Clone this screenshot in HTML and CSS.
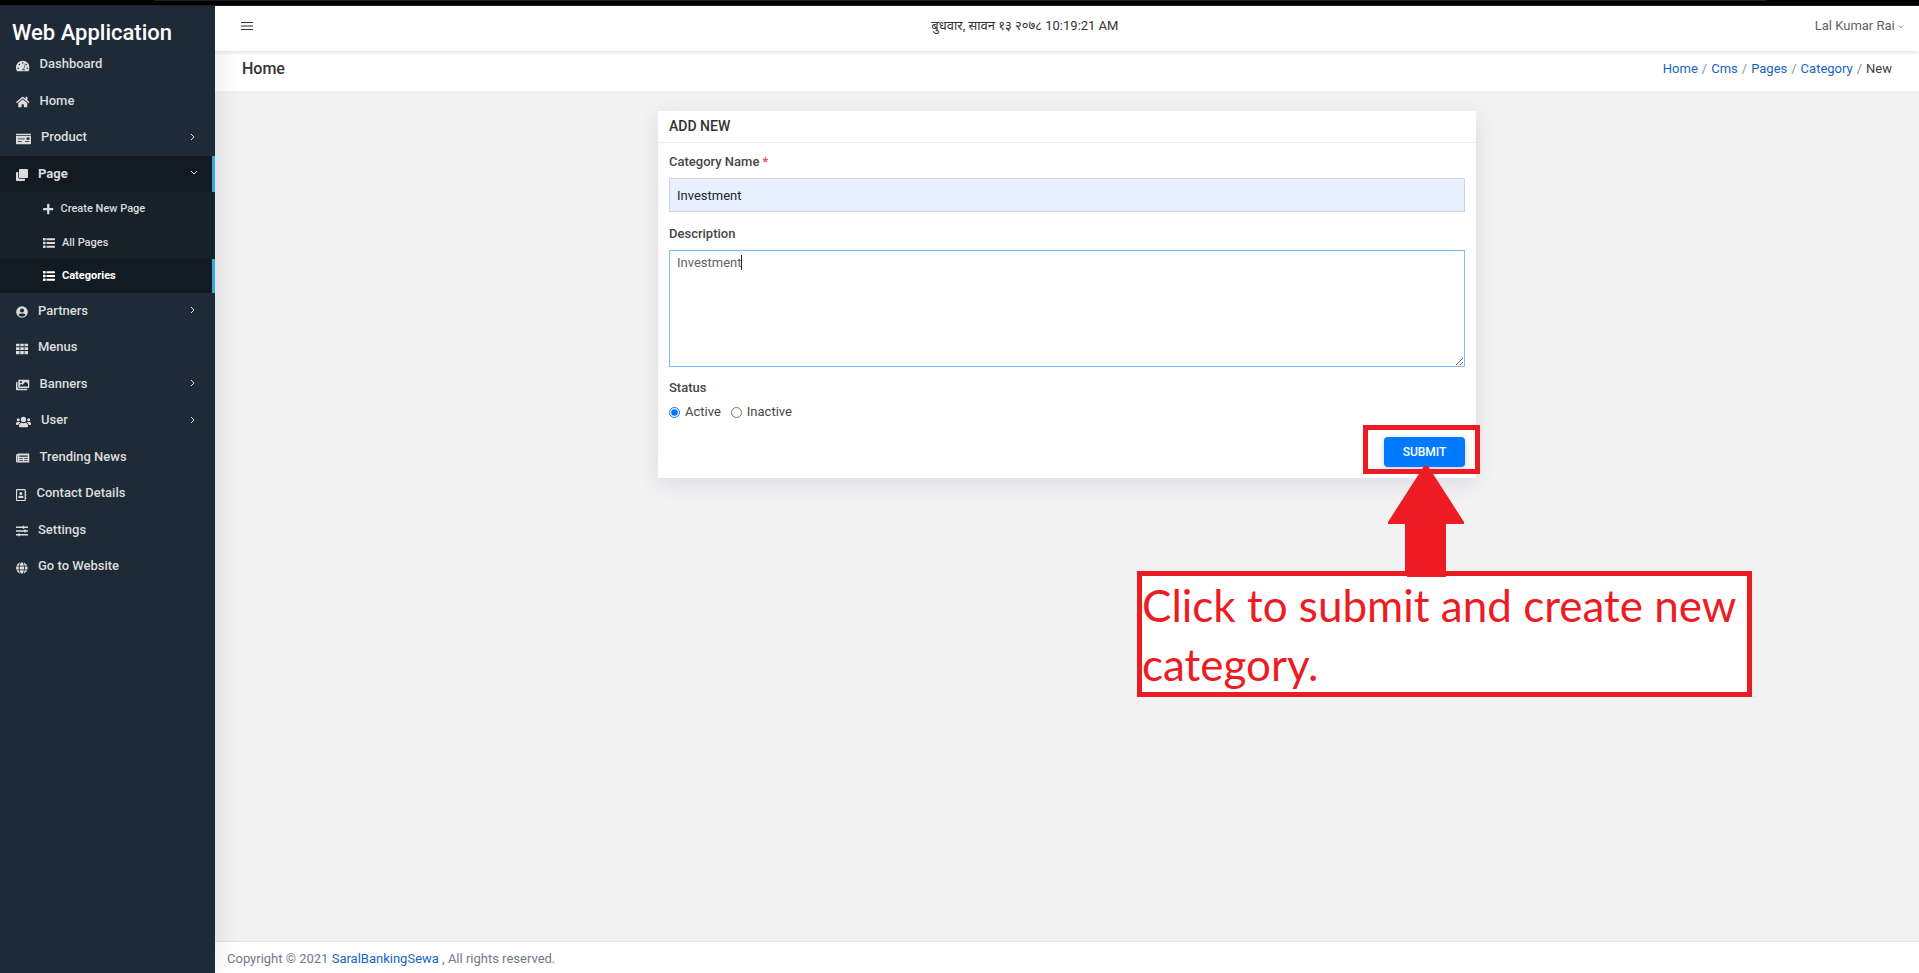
FILE: index.html
```html
<!DOCTYPE html>
<html lang="en">
<head>
<meta charset="utf-8">
<title>Web Application</title>
<link rel="stylesheet" href="styles.css">
</head>
<body>
<svg class="sprite" aria-hidden="true">
  <symbol id="gauge" viewBox="0 0 576 512"><path fill-rule="evenodd" d="M288 32C129 32 0 161 0 320c0 53 14 102 39 145 6 10 16 15 28 15h442c12 0 22-5 28-15 25-43 39-92 39-145C576 161 447 32 288 32zm0 64c18 0 32 14 32 32s-14 32-32 32-32-14-32-32 14-32 32-32zM96 384a32 32 0 1 1 0-64 32 32 0 0 1 0 64zm48-160a32 32 0 1 1 0-64 32 32 0 0 1 0 64zm246-72c13 4 20 18 16 30l-62 186c15 14 24 33 24 48 0 12-3 22-8 32h-40l70-250c3-10-12-14-16-4l-74 254h-20c-5-10-8-20-8-32 0-35 28-64 64-64h10l62-185c4-12 12-17 22-15zm42 72a32 32 0 1 1 0-64 32 32 0 0 1 0 64zm48 160a32 32 0 1 1 0-64 32 32 0 0 1 0 64z"/></symbol>
  <symbol id="house" viewBox="0 0 576 512"><path d="M280.4 148.300L96 300.100V464a16 16 0 0 0 16 16l112-.3a16 16 0 0 0 16-16V368a16 16 0 0 1 16-16h64a16 16 0 0 1 16 16v95.600a16 16 0 0 0 16 16.100L464 480a16 16 0 0 0 16-16V300L295.700 148.300a12.200 12.200 0 0 0-15.300 0zM571.600 251.500L488 182.600V44.100a12 12 0 0 0-12-12h-56a12 12 0 0 0-12 12v72.600L318.500 43a48 48 0 0 0-61 0L4.300 251.500a12 12 0 0 0-1.600 16.900l25.500 31a12 12 0 0 0 16.900 1.600l235.200-193.700a12.200 12.200 0 0 1 15.300 0L530.900 301a12 12 0 0 0 16.900-1.600l25.500-31a12 12 0 0 0-1.700-16.900z"/></symbol>
  <symbol id="check" viewBox="0 0 640 512"><path fill-rule="evenodd" d="M624 32H16C7 32 0 39 0 48v48h640V48c0-9-7-16-16-16zM0 128v320c0 18 14 32 32 32h576c18 0 32-14 32-32V128H0zm448 80c0-9 7-16 16-16h96c9 0 16 7 16 16v64c0 9-7 16-16 16h-96c-9 0-16-7-16-16v-64zM72 232h304v32H72v-32zm0 112h176v32H72v-32zm312 0h184v32H384v-32z"/></symbol>
  <symbol id="clone" viewBox="0 0 512 512"><path d="M464 0c26.500 0 48 21.500 48 48v288c0 26.500-21.500 48-48 48H176c-26.500 0-48-21.500-48-48V48c0-26.500 21.500-48 48-48h288M176 416c-44.100 0-80-35.900-80-80V128H48c-26.500 0-48 21.500-48 48v288c0 26.500 21.500 48 48 48h288c26.500 0 48-21.500 48-48v-48H176z"/></symbol>
  <symbol id="plus" viewBox="0 0 448 512"><path d="M416 208H272V64c0-17.700-14.300-32-32-32h-32c-17.700 0-32 14.300-32 32v144H32c-17.700 0-32 14.300-32 32v32c0 17.700 14.300 32 32 32h144v144c0 17.700 14.300 32 32 32h32c17.700 0 32-14.300 32-32V304h144c17.700 0 32-14.300 32-32v-32c0-17.700-14.300-32-32-32z"/></symbol>
  <symbol id="list" viewBox="0 0 512 512"><path d="M16 40h80a16 16 0 0 1 16 16v72a16 16 0 0 1-16 16H16a16 16 0 0 1-16-16V56a16 16 0 0 1 16-16zm0 160h80a16 16 0 0 1 16 16v72a16 16 0 0 1-16 16H16a16 16 0 0 1-16-16v-72a16 16 0 0 1 16-16zm0 160h80a16 16 0 0 1 16 16v72a16 16 0 0 1-16 16H16a16 16 0 0 1-16-16v-72a16 16 0 0 1 16-16zM160 56h336a16 16 0 0 1 16 16v48a16 16 0 0 1-16 16H160a16 16 0 0 1-16-16V72a16 16 0 0 1 16-16zm0 160h336a16 16 0 0 1 16 16v48a16 16 0 0 1-16 16H160a16 16 0 0 1-16-16v-48a16 16 0 0 1 16-16zm0 160h336a16 16 0 0 1 16 16v48a16 16 0 0 1-16 16H160a16 16 0 0 1-16-16v-48a16 16 0 0 1 16-16z"/></symbol>
  <symbol id="person" viewBox="0 0 512 512"><path fill-rule="evenodd" d="M256 8a248 248 0 1 0 0 496 248 248 0 0 0 0-496zm0 96a88 88 0 1 1 0 176 88 88 0 0 1 0-176zm0 344c-59 0-111-27-146-69 19-35 56-59 98-59 13 0 23 8 48 8s35-8 48-8c42 0 79 24 98 59-35 42-87 69-146 69z"/></symbol>
  <symbol id="grid" viewBox="0 0 512 512"><path d="M24 32h102a24 24 0 0 1 24 24v80H0V56a24 24 0 0 1 24-24zm157 0h150v104H181zm181 0h126a24 24 0 0 1 24 24v80H362zM0 181h150v118H0zm181 0h150v118H181zm181 0h150v118H362zM0 344h150v136H24a24 24 0 0 1-24-24zm181 0h150v136H181zm181 0h150v112a24 24 0 0 1-24 24H362z"/></symbol>
  <symbol id="images" viewBox="0 0 576 512"><path fill-rule="evenodd" d="M480 416v16c0 26-21 48-48 48H48c-27 0-48-22-48-48V176c0-26 21-48 48-48h16v208c0 44 36 80 80 80h336zm96-80V80c0-26-21-48-48-48H144c-27 0-48 22-48 48v256c0 27 21 48 48 48h384c27 0 48-21 48-48zM256 128a48 48 0 1 1-96 0 48 48 0 0 1 96 0zm-96 144l55-55c5-5 13-5 17 0l40 39 135-135c5-5 13-5 17 0l88 87v112H160v-48z"/></symbol>
  <symbol id="people" viewBox="0 0 640 512"><path d="M96 224a64 64 0 1 0 0-128 64 64 0 0 0 0 128zm448 0a64 64 0 1 0 0-128 64 64 0 0 0 0 128zm32 32h-64c-18 0-33 7-45 18 40 22 69 62 75 110h66c18 0 32-14 32-32v-32c0-35-29-64-64-64zm-256 0a112 112 0 1 0 0-224 112 112 0 0 0 0 224zm77 32h-8a155 155 0 0 1-138 0h-8c-64 0-115 52-115 115v29c0 26 21 48 48 48h288c27 0 48-22 48-48v-29c0-63-52-115-115-115zm-224-14c-12-11-27-18-45-18H64c-35 0-64 29-64 64v32c0 18 14 32 32 32h66c6-48 35-88 75-110z"/></symbol>
  <symbol id="news" viewBox="0 0 576 512"><path fill-rule="evenodd" d="M552 64H88c-13 0-24 11-24 24v8H24c-13 0-24 11-24 24v272c0 31 25 56 56 56h496c13 0 24-11 24-24V88c0-13-11-24-24-24zM48 400V144h16v256c0 12-16 12-16 0zm92-256h360v56H140v-56zm0 114h156v30H140v-30zm204 0h156v30H344v-30zM140 344h156v30H140v-30zm204 0h156v30H344v-30z"/></symbol>
  <symbol id="contact" viewBox="0 0 448 512"><path fill-rule="evenodd" d="M436 160c7 0 12-5 12-12v-40c0-7-5-12-12-12h-20V48c0-26-22-48-48-48H48C22 0 0 22 0 48v416c0 27 22 48 48 48h320c26 0 48-21 48-48v-48h20c7 0 12-5 12-12v-40c0-7-5-12-12-12h-20v-64h20c7 0 12-5 12-12v-40c0-7-5-12-12-12h-20v-64h20zm-68 304H48V48h320v416zM208 256a64 64 0 1 0 0-128 64 64 0 0 0 0 128zm-90 128h180c12 0 22-9 22-19v-19c0-32-30-58-67-58-11 0-20 8-45 8-26 0-34-8-45-8-37 0-67 26-67 58v19c0 10 10 19 22 19z"/></symbol>
  <symbol id="sliders" viewBox="0 0 512 512"><path d="M0 64h288V48a16 16 0 0 1 16-16h32a16 16 0 0 1 16 16v16h160v64H352v16a16 16 0 0 1-16 16h-32a16 16 0 0 1-16-16v-16H0zm0 160h352v-16a16 16 0 0 1 16-16h32a16 16 0 0 1 16 16v16h96v64h-96v16a16 16 0 0 1-16 16h-32a16 16 0 0 1-16-16v-16H0zm0 160h96v-16a16 16 0 0 1 16-16h32a16 16 0 0 1 16 16v16h352v64H160v16a16 16 0 0 1-16 16h-32a16 16 0 0 1-16-16v-16H0z"/></symbol>
  <symbol id="globe" viewBox="0 0 512 512"><path d="M336.500 160C322 70.700 287.800 8 248 8s-74 62.700-88.500 152h177zM152 256c0 22.200 1.200 43.500 3.300 64h185.300c2.100-20.500 3.300-41.800 3.300-64s-1.200-43.500-3.300-64H155.300c-2.100 20.500-3.300 41.800-3.300 64zm324.700-96c-28.600-67.900-86.500-120.400-158-141.600 24.400 33.800 41.200 84.700 50 141.600h108zM177.200 18.400C105.800 39.600 47.800 92.100 19.300 160h108c8.700-56.900 25.500-107.800 49.900-141.600zM487.400 192H372.700c2.100 21 3.300 42.500 3.300 64s-1.200 43-3.300 64h114.600c5.500-20.500 8.600-41.800 8.600-64s-3.100-43.500-8.500-64zM120 256c0-21.500 1.200-43 3.300-64H8.600C3.200 212.500 0 233.800 0 256s3.200 43.500 8.600 64h114.600c-2-21-3.200-42.500-3.200-64zm39.500 96c14.500 89.300 48.700 152 88.500 152s74-62.700 88.500-152h-177zm159.300 141.600c71.400-21.200 129.400-73.700 158-141.600h-108c-8.800 56.900-25.600 107.800-50 141.600zM19.300 352c28.600 67.900 86.500 120.400 158 141.600-24.400-33.800-41.200-84.700-50-141.600h-108z"/></symbol>
  <symbol id="right" viewBox="0 0 8 8"><path d="M1 1l3 3-3 3" fill="none" stroke="currentColor"/></symbol>
  <symbol id="down" viewBox="0 0 8 8"><path d="M1 2l3 3 3-3" fill="none" stroke="currentColor"/></symbol>
</svg>

<div class="browser-edge"></div>
<div class="app">
  <aside class="sidebar">
    <div class="brand">Web Application</div>
    <nav>
      <ul class="menu">
        <li><a class="item" href="#"><svg class="icon" viewBox="0 0 576 512"><use href="#gauge"/></svg>Dashboard</a></li>
        <li><a class="item" href="#"><svg class="icon" viewBox="0 0 576 512"><use href="#house"/></svg>Home</a></li>
        <li><a class="item" href="#"><svg class="icon" viewBox="0 0 640 512"><use href="#check"/></svg>Product<svg class="arrow" viewBox="0 0 8 8"><use href="#right"/></svg></a></li>
        <li><a class="item active" href="#"><svg class="icon" viewBox="0 0 512 512"><use href="#clone"/></svg>Page<svg class="arrow" viewBox="0 0 8 8"><use href="#down"/></svg></a>
          <ul class="submenu">
            <li><a class="subitem" href="#"><svg class="icon" viewBox="0 0 448 512"><use href="#plus"/></svg>Create New Page</a></li>
            <li><a class="subitem" href="#"><svg class="icon" viewBox="0 0 512 512"><use href="#list"/></svg>All Pages</a></li>
            <li><a class="subitem current" href="#"><svg class="icon" viewBox="0 0 512 512"><use href="#list"/></svg>Categories</a></li>
          </ul>
        </li>
        <li><a class="item" href="#"><svg class="icon" viewBox="0 0 512 512"><use href="#person"/></svg>Partners<svg class="arrow" viewBox="0 0 8 8"><use href="#right"/></svg></a></li>
        <li><a class="item" href="#"><svg class="icon" viewBox="0 0 512 512"><use href="#grid"/></svg>Menus</a></li>
        <li><a class="item" href="#"><svg class="icon" viewBox="0 0 576 512"><use href="#images"/></svg>Banners<svg class="arrow" viewBox="0 0 8 8"><use href="#right"/></svg></a></li>
        <li><a class="item" href="#"><svg class="icon" viewBox="0 0 640 512"><use href="#people"/></svg>User<svg class="arrow" viewBox="0 0 8 8"><use href="#right"/></svg></a></li>
        <li><a class="item" href="#"><svg class="icon" viewBox="0 0 576 512"><use href="#news"/></svg>Trending News</a></li>
        <li><a class="item" href="#"><svg class="icon" viewBox="0 0 448 512"><use href="#contact"/></svg>Contact Details</a></li>
        <li><a class="item" href="#"><svg class="icon" viewBox="0 0 512 512"><use href="#sliders"/></svg>Settings</a></li>
        <li><a class="item" href="#"><svg class="icon" viewBox="0 0 512 512"><use href="#globe"/></svg>Go to Website</a></li>
      </ul>
    </nav>
  </aside>

  <div class="content">
    <header class="topbar">
      <button class="toggle" type="button" aria-label="Toggle menu"><svg viewBox="0 0 12 10"><path d="M0 1.500h12M0 5h12M0 8.500h12" fill="none" stroke="currentColor"/></svg></button>
      <div class="clock">बुधवार, सावन १३ २०७८ 10:19:21 AM</div>
      <button class="account" type="button">Lal Kumar Rai <svg viewBox="0 0 8 8"><use href="#down"/></svg></button>
    </header>
    <div class="titlebar">
      <h1>Home</h1>
      <nav aria-label="Breadcrumb">
        <ol class="crumbs">
          <li><a href="#">Home</a></li>
          <li><a href="#">Cms</a></li>
          <li><a href="#">Pages</a></li>
          <li><a href="#">Category</a></li>
          <li>New</li>
        </ol>
      </nav>
    </div>
    <main class="main">
      <form class="card">
        <h2>ADD NEW</h2>
        <div class="fields">
          <label class="label" for="name">Category Name <span class="required">*</span></label>
          <input class="text" id="name" type="text" value="Investment">
          <label class="label" for="description">Description</label>
          <div class="editor">
            <textarea class="text area" id="description">Investment</textarea>
            <span class="caret"></span>
          </div>
          <fieldset class="status">
            <legend class="label">Status</legend>
            <label class="choice"><input type="radio" name="status" checked>Active</label>
            <label class="choice"><input type="radio" name="status">Inactive</label>
          </fieldset>
          <div class="submit-spot">
            <button class="submit" type="submit">SUBMIT</button>
            <span class="frame"></span>
            <p class="note">Click to submit and create new category.</p>
            <svg class="pointer" viewBox="0 0 76 112"><path d="M36 0h4l36 56v2H58v53H19v-1h-2V58H0v-2z" fill="#ed1c24"/></svg>
          </div>
        </div>
      </form>
    </main>
    <footer class="footer">Copyright © 2021 <a href="#">SaralBankingSewa</a> , All rights reserved.</footer>
  </div>
</div>
</body>
</html>
```
FILE: styles.css
```css
* { box-sizing: border-box; }

body {
  margin: 0;
  min-height: 100vh;
  display: flex;
  flex-direction: column;
  font: 13px/1.5 Roboto, "Noto Sans", sans-serif;
  color: #3c4043;
  background: #f2f2f2;
}

a { color: #1565c0; text-decoration: none; }
ul, ol { margin: 0; padding: 0; list-style: none; }
h1, h2, p { margin: 0; }
button, input, textarea { font: inherit; }

.sprite { display: none; }

.browser-edge {
  height: 6px;
  background: linear-gradient(#202124, #202124) center top / 84% 1px no-repeat #000;
  border-bottom: 1px solid #202124;
}

.app { flex: 1; display: flex; }

/* Sidebar */
.sidebar {
  width: 215px;
  flex: none;
  background: #1e2b37;
  box-shadow: 0 0 28px rgba(0, 0, 0, .1);
  z-index: 1;
}

.brand {
  height: 40px;
  padding: 10px 12px 0;
  font-size: 22px;
  line-height: 33px;
  font-weight: 500;
  color: #fff;
}

.item,
.subitem {
  display: flex;
  align-items: center;
  padding: 8px 17px 9px 16px;
  color: #dcdcdc;
  font-weight: 500;
}

.item { gap: 10px; }

.subitem {
  gap: 7px;
  padding: 9px 17px 8px 43px;
  font-size: 11px;
}

.icon {
  height: 12px;
  width: auto;
  fill: currentColor;
}

.item .icon { margin-top: 4px; }

.arrow {
  width: 8px;
  height: 8px;
  margin-left: auto;
}

.submenu { background: #17212a; }

.active,
.current {
  background: #131b22;
  border-right: 3px solid #36a9dc;
  padding-right: 14px;
  font-weight: 700;
}

.current { color: #fff; }

/* Page frame */
.content {
  flex: 1;
  min-width: 0;
  display: flex;
  flex-direction: column;
}

.topbar {
  position: relative;
  z-index: 2;
  height: 45px;
  padding: 0 15px 6px 26px;
  display: flex;
  justify-content: space-between;
  align-items: center;
  background: #fff;
  box-shadow: 0 1px 4px rgba(0, 0, 0, .15);
}

.toggle,
.account {
  border: 0;
  padding: 0;
  background: none;
  color: #5f6368;
}

.toggle { display: flex; color: #333; }
.toggle svg { width: 12px; height: 10px; }
.clock { color: #333; }
.account { padding-left: 18px; }
.account svg { width: 6px; height: 6px; }

.titlebar {
  height: 40px;
  padding: 0 27px 4px;
  display: flex;
  justify-content: space-between;
  align-items: center;
  background: #fff;
}

.titlebar h1 {
  font-size: 16px;
  line-height: 24px;
  font-weight: 500;
  color: #333;
}

.crumbs { display: flex; }
.crumbs li + li::before { content: "/"; padding: 0 4px; color: #868e96; }

.main { flex: 1; padding: 20px 34px; }

.footer {
  height: 32px;
  padding: 7px 12px;
  background: #fff;
  border-top: 1px solid #e2e5ec;
  line-height: 20px;
  color: #74788d;
}

/* Form card */
.card {
  width: 50%;
  margin: 0 auto;
  background: #fff;
  box-shadow: 0 5px 20px rgba(69, 65, 120, .12);
}

.card h2 {
  padding: 5px 11px 6px;
  border-bottom: 1px solid #ebedf2;
  font-size: 14px;
  line-height: 20px;
  font-weight: 500;
  color: #333;
}

.fields {
  padding: 9px 11px 11px;
  display: flex;
  flex-direction: column;
}

.label {
  padding: 0;
  line-height: 20px;
  margin-bottom: 6px;
  font-weight: 500;
  color: #464646;
}

.required { color: #f44336; }

.text {
  display: block;
  width: 100%;
  height: 34px;
  margin: 0 0 12px;
  padding: 4px 7px;
  border: 1px solid #ced4da;
  border-radius: 0;
  background: #e8f0fe;
  color: #212529;
  outline: 0;
}

.editor { position: relative; }

.area {
  height: 117px;
  padding: 2px 7px;
  margin-bottom: 11px;
  background: #fff;
  border-color: #80bdff;
  color: #5f6368;
  resize: vertical;
}

.caret {
  position: absolute;
  left: 72px;
  top: 5px;
  width: 1px;
  height: 15px;
  background: #222;
}

.status {
  border: 0;
  margin: 0;
  padding: 0;
  display: flex;
  gap: 10px;
}

.choice { display: flex; align-items: center; gap: 5px; line-height: 16px; color: #464646; }
.choice input { margin: 0; width: 11px; height: 11px; accent-color: #0075ff; }

.submit-spot {
  position: relative;
  align-self: flex-end;
  margin-top: 17px;
}

.submit {
  display: block;
  width: 81px;
  height: 30px;
  padding: 0;
  border: 0;
  border-radius: 4px;
  background: #007bff;
  color: #fff;
  font-size: 12px;
  font-weight: 500;
  box-shadow: 0 2px 6px rgba(69, 65, 120, .3);
}

/* Callout over the page */
.frame {
  position: absolute;
  inset: -12px -15px -7px -21px;
  border: 5px solid #ed1c24;
}

.pointer {
  position: absolute;
  left: 4px;
  top: 29px;
  width: 76px;
  height: 112px;
}

.note {
  position: absolute;
  left: -247px;
  top: 134px;
  width: 615px;
  height: 126px;
  border: 5px solid #ed1c24;
  background: #fff;
  color: #ed1c24;
  font-family: Lato, sans-serif;
  font-size: 44px;
  line-height: 59px;
}
```
